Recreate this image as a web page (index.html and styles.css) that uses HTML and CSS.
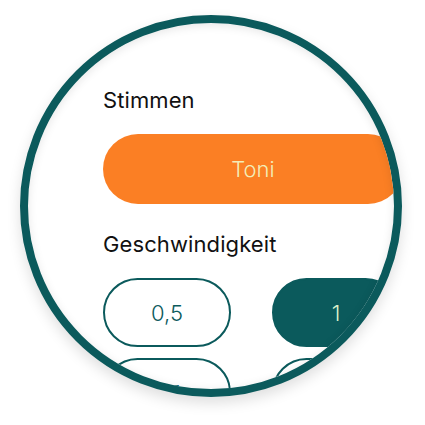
FILE: index.html
```html
<!DOCTYPE html>
<html lang="de">
<head>
<meta charset="utf-8">
<title>Einstellungen</title>
<link rel="stylesheet" href="styles.css">
</head>
<body>
<div class="lens">
  <div class="screen">
    <h2 class="label">Stimmen</h2>
    <div class="voice">Toni</div>
    <h2 class="label label-speed">Geschwindigkeit</h2>
    <div class="speeds">
      <div class="speed">0,5</div>
      <div class="speed active">1</div>
      <div class="speed">1,5</div>
      <div class="speed">2</div>
    </div>
  </div>
</div>
</body>
</html>
```
FILE: styles.css
```css
* { box-sizing: border-box; }
html, body { margin: 0; padding: 0; background: #ffffff; }
body {
  width: 425px;
  height: 425px;
  overflow: hidden;
  font-family: Inter, "Noto Sans", sans-serif;
  padding: 15px 0 0 20px;
}
.lens {
  position: relative;
  width: 382px;
  height: 382px;
  border: 8px solid #0b5a5c;
  border-radius: 50%;
  overflow: hidden;
  background: #ffffff;
  box-shadow: 0 6px 14px rgba(0, 0, 0, 0.13);
}
.lens::after {
  content: "";
  position: absolute;
  inset: 0;
  border-radius: 50%;
  box-shadow: inset 0 2px 10px rgba(0, 0, 0, 0.10);
  pointer-events: none;
}
.screen {
  width: 400px;
  padding: 64px 0 0 75px;
}
.label {
  margin: 0;
  font-size: 22px;
  line-height: 26px;
  font-weight: 400;
  letter-spacing: 0.1px;
  color: #111111;
}
.voice {
  margin-top: 21px;
  width: 300px;
  height: 70px;
  border-radius: 35px;
  background: #fb7f24;
  color: #f3edb8;
  font-size: 22px;
  font-weight: 300;
  display: flex;
  align-items: center;
  justify-content: center;
}
.label-speed { margin-top: 27px; }
.speeds {
  margin-top: 21px;
  display: grid;
  grid-template-columns: 128px 128px;
  column-gap: 41px;
  row-gap: 11px;
}
.speed {
  height: 69px;
  border: 2.5px solid #0b5a5c;
  border-radius: 35px;
  color: #0b5a5c;
  font-size: 22px;
  font-weight: 300;
  display: flex;
  align-items: center;
  justify-content: center;
}
.speed.active {
  background: #0b5a5c;
  color: #d9efc9;
}
```
